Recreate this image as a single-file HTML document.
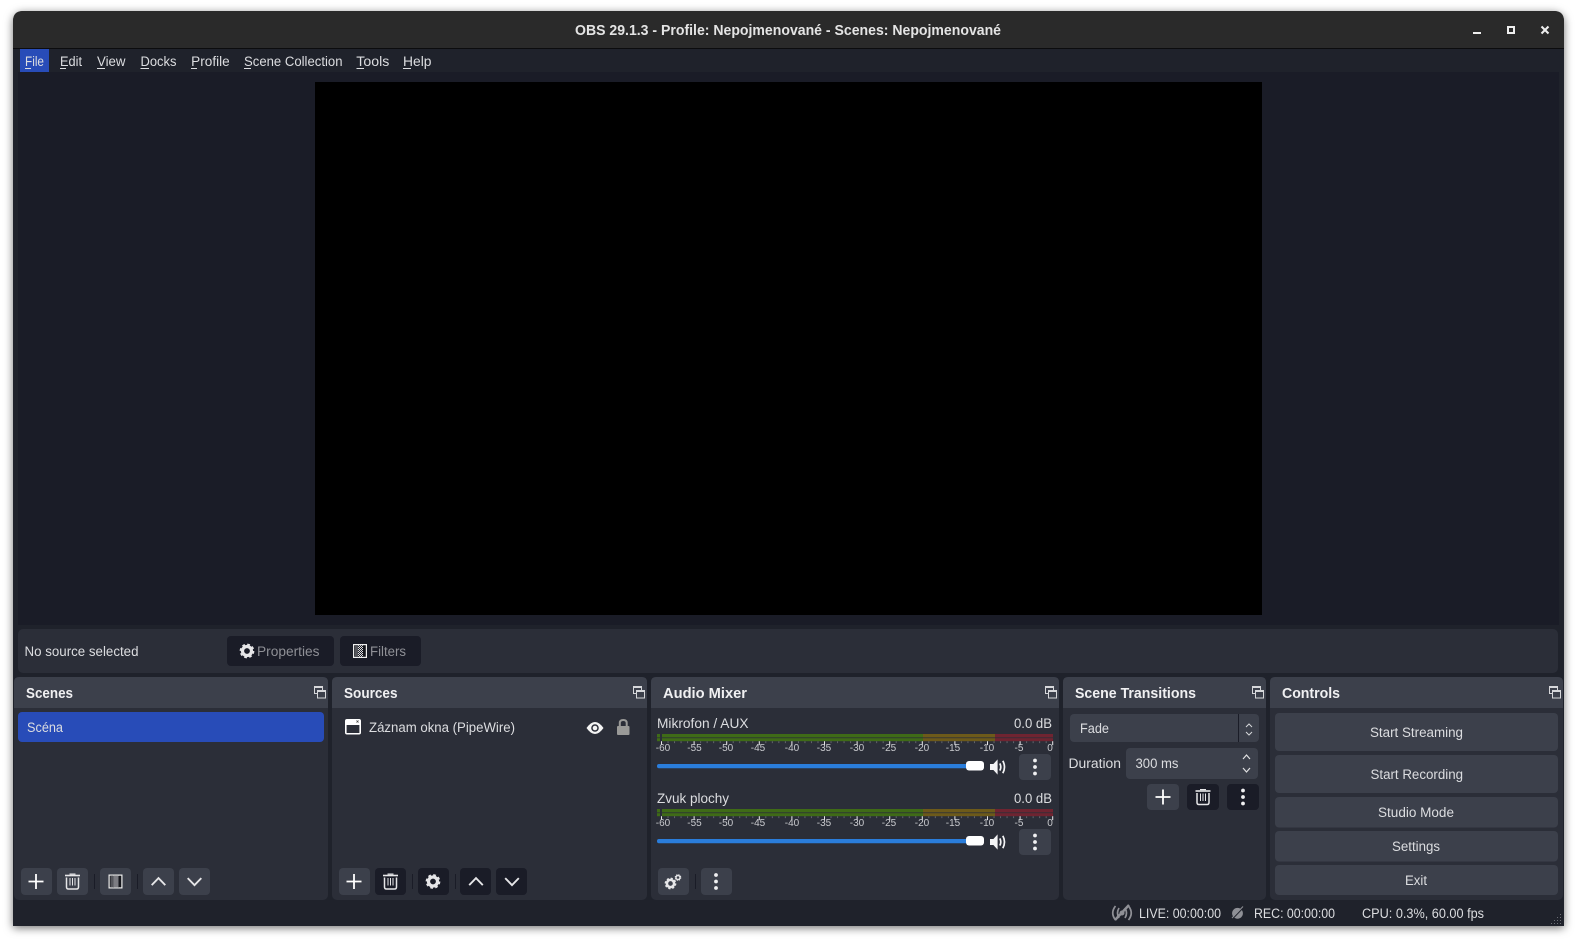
<!DOCTYPE html>
<html><head><meta charset="utf-8"><title>OBS</title>
<style>
html,body{margin:0;padding:0;background:#fff;width:1577px;height:942px;overflow:hidden}
#w{position:absolute;left:13px;top:11px;width:1551px;height:915px;background:#1f222b;border-radius:10px 10px 0 0;box-shadow:0 2px 9px rgba(0,0,0,.55)}
svg{position:absolute;left:0;top:0}
text{font-family:"Liberation Sans",sans-serif;font-size:13.5px;fill:#dcdde0}
.b{font-weight:700;fill:#f0f0f2;font-size:14.5px}
.g{fill:#8f9096}
.m{font-size:10px;fill:#c8c9cd;text-anchor:middle}
</style></head><body>
<div id="w"></div>
<svg width="1577" height="942" viewBox="0 0 1577 942" xmlns="http://www.w3.org/2000/svg">
<defs>
<g id="float" fill="none" stroke="#d6d7da" stroke-width="1">
<path d="M.5 .5H8.5V7.5H.5Z" fill="#3c404b"/><path d="M0 1H9" stroke-width="2"/>
<path d="M3.5 4.5H11.5V12H3.5Z" fill="#3c404b"/><path d="M3 5H12" stroke-width="2"/>
</g>
<g id="plus" stroke="#fff" stroke-width="1.8"><path d="M-7.5 0H7.5M0 -7.5V7.5"/></g>
<g id="trash" fill="none" stroke="#e6e6e8" stroke-width="1.5">
<path d="M-7.5 -6H7.5" stroke-width="1.6"/><path d="M-3 -7.4H3" stroke-width="1.2"/>
<path d="M-6 -4V5.5Q-6 7.5 -4 7.5H4Q6 7.5 6 5.5V-4"/>
<path d="M-2.5 -3.5V4M0 -3.5V4M2.5 -3.5V4" stroke-width="1"/>
</g>
<g id="gear">
<circle r="4.5" fill="none" stroke="#e6e6e8" stroke-width="3.2"/>
<circle r="6.4" fill="none" stroke="#e6e6e8" stroke-width="1.9" stroke-dasharray="2.7 2.33"/>
</g>
<g id="up"><path d="M-6.8 3.6L0 -3.4L6.8 3.6" fill="none" stroke="#e6e6e8" stroke-width="1.9"/></g>
<g id="down"><path d="M-6.8 -3.4L0 3.6L6.8 -3.4" fill="none" stroke="#e6e6e8" stroke-width="1.9"/></g>
<g id="dots" fill="#f0f0f2"><circle cy="-6.5" r="1.9"/><circle r="1.9"/><circle cy="6.5" r="1.9"/></g>
<pattern id="dith" width="2" height="2" patternUnits="userSpaceOnUse"><rect width="2" height="2" fill="#1a1c27"/><rect width="1" height="1" fill="#ddd"/><rect x="1" y="1" width="1" height="1" fill="#ddd"/></pattern>
<g id="filter">
<rect x=".6" y=".6" width="12.8" height="12.8" fill="#15161c" stroke="#eee" stroke-width="1.2"/>
<rect x="5" y="1.2" width="5" height="11.6" fill="url(#dith)"/>
<rect x="2" y="1.2" width="3" height="11.6" fill="#55565c"/>
</g>
<g id="spk" fill="#f4f4f6">
<path d="M0 -3H3.4L7.6 -7.6V7.6L3.4 3H0Z"/>
<path d="M9.8 -3.6Q11.8 0 9.8 3.6M12.8 -6.2Q16.2 0 12.8 6.2" fill="none" stroke="#f4f4f6" stroke-width="1.7"/>
</g>
<g id="meter">
<rect x="0" y="0" width="3" height="3.4" fill="#3f6b17"/><rect x="0" y="4.2" width="3" height="3" fill="#3f6b17"/>
<rect x="5" y="0" width="261" height="3.4" fill="#3f6b17"/><rect x="5" y="4.2" width="261" height="3" fill="#3f6b17"/>
<rect x="266" y="0" width="72" height="3.4" fill="#6d5a1a"/><rect x="266" y="4.2" width="72" height="3" fill="#6d5a1a"/>
<rect x="338" y="0" width="58" height="3.4" fill="#6f2431"/><rect x="338" y="4.2" width="58" height="3" fill="#6f2431"/>
<path d="M4 8.2H396" stroke="#63656c" stroke-width="1.8" stroke-dasharray="1 5.52"/>
<path d="M4 9.2H396.5" stroke="#e6e6e8" stroke-width="3.8" stroke-dasharray="1 31.6"/>
</g>
</defs>

<!-- title bar -->
<path d="M13 48V21Q13 11 23 11H1554Q1564 11 1564 21V48Z" fill="#2a2a2a"/>
<rect x="13" y="48" width="1551" height="1" fill="#0c0c0e"/>
<text x="575" y="35" textLength="426" lengthAdjust="spacingAndGlyphs" style="font-size:14.5px;font-weight:700;fill:#e4e4e4">OBS 29.1.3 - Profile: Nepojmenované - Scenes: Nepojmenované</text>
<rect x="1473" y="32" width="8" height="2" fill="#eee"/>
<rect x="1508" y="27" width="6" height="6" fill="none" stroke="#eee" stroke-width="2"/>
<path d="M1541.5 26.5L1548.5 33.5M1548.5 26.5L1541.5 33.5" stroke="#eee" stroke-width="2.1"/>

<!-- menu -->
<rect x="18" y="72" width="1541" height="553" fill="#1a1c27"/>
<rect x="20" y="49" width="29" height="23" fill="#284cb8"/>
<g>
<text x="25" y="66" textLength="19" lengthAdjust="spacingAndGlyphs">File</text>
<text x="60" y="66" textLength="22" lengthAdjust="spacingAndGlyphs">Edit</text>
<text x="97" y="66" textLength="28.5" lengthAdjust="spacingAndGlyphs">View</text>
<text x="140.5" y="66" textLength="36" lengthAdjust="spacingAndGlyphs">Docks</text>
<text x="191.2" y="66" textLength="38.5" lengthAdjust="spacingAndGlyphs">Profile</text>
<text x="244" y="66" textLength="98.5" lengthAdjust="spacingAndGlyphs">Scene Collection</text>
<text x="356.3" y="66" textLength="33" lengthAdjust="spacingAndGlyphs">Tools</text>
<text x="403" y="66" textLength="28.5" lengthAdjust="spacingAndGlyphs">Help</text>
</g>
<path d="M25 68.5H31M60 68.5H66M97 68.5H105M140.5 68.5H149M191 68.5H197M244 68.5H251M356.5 68.5H364M403 68.5H411" stroke="#dcdde0" stroke-width="1"/>

<!-- preview -->
<rect x="315" y="82" width="947" height="533" fill="#000"/>

<!-- context bar -->
<rect x="18" y="629" width="1540" height="44" rx="5" fill="#2b2e38"/>
<text x="24.5" y="656" textLength="114" lengthAdjust="spacingAndGlyphs">No source selected</text>
<rect x="227" y="636" width="107" height="30" rx="4" fill="#1a1c27"/>
<use href="#gear" transform="translate(247 651)"/>
<text x="257" y="656" textLength="62.5" lengthAdjust="spacingAndGlyphs" class="g">Properties</text>
<rect x="340" y="636" width="81" height="30" rx="4" fill="#1a1c27"/>
<use href="#filter" transform="translate(353 644)"/>
<text x="370" y="656" textLength="36" lengthAdjust="spacingAndGlyphs" class="g">Filters</text>

<!-- docks -->
<g fill="#2b2e38">
<rect x="14" y="677" width="314" height="223" rx="5"/>
<rect x="332" y="677" width="315" height="223" rx="5"/>
<rect x="651" y="677" width="408" height="223" rx="5"/>
<rect x="1063" y="677" width="203" height="223" rx="5"/>
<rect x="1270" y="677" width="293" height="223" rx="5"/>
</g>
<g fill="#3c404b">
<path d="M14 708V682Q14 677 19 677H323Q328 677 328 682V708Z"/>
<path d="M332 708V682Q332 677 337 677H642Q647 677 647 682V708Z"/>
<path d="M651 708V682Q651 677 656 677H1054Q1059 677 1059 682V708Z"/>
<path d="M1063 708V682Q1063 677 1068 677H1261Q1266 677 1266 682V708Z"/>
<path d="M1270 708V682Q1270 677 1275 677H1558Q1563 677 1563 682V708Z"/>
</g>
<text class="b" x="26" y="698" textLength="47" lengthAdjust="spacingAndGlyphs">Scenes</text>
<text class="b" x="344" y="698" textLength="53.5" lengthAdjust="spacingAndGlyphs">Sources</text>
<text class="b" x="663" y="698" textLength="84" lengthAdjust="spacingAndGlyphs">Audio Mixer</text>
<text class="b" x="1075" y="698" textLength="121" lengthAdjust="spacingAndGlyphs">Scene Transitions</text>
<text class="b" x="1282" y="698" textLength="58" lengthAdjust="spacingAndGlyphs">Controls</text>
<use href="#float" transform="translate(314 686)"/>
<use href="#float" transform="translate(633 686)"/>
<use href="#float" transform="translate(1045 686)"/>
<use href="#float" transform="translate(1252 686)"/>
<use href="#float" transform="translate(1549 686)"/>

<!-- scenes -->
<rect x="18" y="712" width="306" height="30" rx="4" fill="#284cb8"/>
<text x="27" y="732" textLength="36" lengthAdjust="spacingAndGlyphs">Scéna</text>
<g fill="#3c404b">
<rect x="21" y="868" width="31" height="27" rx="4"/><rect x="57" y="868" width="31" height="27" rx="4"/>
<rect x="100" y="868" width="31" height="27" rx="4"/><rect x="143" y="868" width="31" height="27" rx="4"/><rect x="179" y="868" width="31" height="27" rx="4"/>
</g>
<rect x="94" y="874" width="1" height="15" fill="#1a1c27"/><rect x="137" y="874" width="1" height="15" fill="#1a1c27"/>
<use href="#plus" transform="translate(36 881.5)"/>
<use href="#trash" transform="translate(72.5 881.5)"/>
<use href="#filter" transform="translate(108.5 874.5)"/>
<use href="#up" transform="translate(158.5 881.5)"/>
<use href="#down" transform="translate(194.5 881.5)"/>

<!-- sources -->
<rect x="345" y="719" width="16" height="15.5" rx="2" fill="#fff"/>
<rect x="346.6" y="725" width="12.8" height="8" fill="#2b2e38"/>
<path d="M356.5 720.5L358.5 722.5M358.5 720.5L356.5 722.5" stroke="#444" stroke-width=".8"/>
<text x="369" y="732" textLength="146" lengthAdjust="spacingAndGlyphs">Záznam okna (PipeWire)</text>
<path d="M586.5 728Q595 716 603.5 728Q595 740 586.5 728Z" fill="#f4f4f4"/>
<circle cx="595" cy="728" r="3.8" fill="#2b2e38"/><circle cx="595" cy="728" r="2.3" fill="#f4f4f4"/>
<rect x="617" y="726" width="12.5" height="9" rx="1" fill="#9a9a98"/>
<path d="M619.8 726.5V723Q619.8 720 623.25 720Q626.7 720 626.7 723V726.5" fill="none" stroke="#9a9a98" stroke-width="2"/>
<rect x="339" y="868" width="31" height="27" rx="4" fill="#3c404b"/>
<g fill="#1a1c27">
<rect x="375" y="868" width="31" height="27" rx="4"/><rect x="418" y="868" width="31" height="27" rx="4"/>
<rect x="460" y="868" width="31" height="27" rx="4"/><rect x="496" y="868" width="31" height="27" rx="4"/>
<rect x="412" y="874" width="1" height="15"/><rect x="455" y="874" width="1" height="15"/>
</g>
<use href="#plus" transform="translate(354 881.5)"/>
<use href="#trash" transform="translate(390.5 881.5)"/>
<use href="#gear" transform="translate(433 881.5)"/>
<use href="#up" transform="translate(476 881.5)"/>
<use href="#down" transform="translate(512 881.5)"/>

<!-- mixer channel 1 -->
<text x="657" y="728" textLength="91.5" lengthAdjust="spacingAndGlyphs">Mikrofon / AUX</text>
<text x="1014" y="728" textLength="38" lengthAdjust="spacingAndGlyphs">0.0 dB</text>
<use href="#meter" transform="translate(657 734)"/>
<g>
<text class="m" x="663" y="751">-60</text><text class="m" x="694.5" y="751">-55</text><text class="m" x="726" y="751">-50</text><text class="m" x="758" y="751">-45</text><text class="m" x="792" y="751">-40</text><text class="m" x="824" y="751">-35</text><text class="m" x="857" y="751">-30</text><text class="m" x="889" y="751">-25</text><text class="m" x="922" y="751">-20</text><text class="m" x="953" y="751">-15</text><text class="m" x="987" y="751">-10</text><text class="m" x="1019" y="751">-5</text><text class="m" x="1050" y="751">0</text>
</g>
<rect x="657" y="764" width="312" height="4.2" rx="2" fill="#2a7ddb"/>
<rect x="966" y="761" width="18" height="9.5" rx="3" fill="#fff"/>
<use href="#spk" transform="translate(990 767)"/>
<rect x="1019" y="754" width="32" height="26" rx="4" fill="#3c404b"/>
<use href="#dots" transform="translate(1035 767)"/>

<!-- mixer channel 2 -->
<text x="657" y="803" textLength="72" lengthAdjust="spacingAndGlyphs">Zvuk plochy</text>
<text x="1014" y="803" textLength="38" lengthAdjust="spacingAndGlyphs">0.0 dB</text>
<use href="#meter" transform="translate(657 809)"/>
<g>
<text class="m" x="663" y="826">-60</text><text class="m" x="694.5" y="826">-55</text><text class="m" x="726" y="826">-50</text><text class="m" x="758" y="826">-45</text><text class="m" x="792" y="826">-40</text><text class="m" x="824" y="826">-35</text><text class="m" x="857" y="826">-30</text><text class="m" x="889" y="826">-25</text><text class="m" x="922" y="826">-20</text><text class="m" x="953" y="826">-15</text><text class="m" x="987" y="826">-10</text><text class="m" x="1019" y="826">-5</text><text class="m" x="1050" y="826">0</text>
</g>
<rect x="657" y="839" width="312" height="4.2" rx="2" fill="#2a7ddb"/>
<rect x="966" y="836" width="18" height="9.5" rx="3" fill="#fff"/>
<use href="#spk" transform="translate(990 842)"/>
<rect x="1019" y="829" width="32" height="26" rx="4" fill="#3c404b"/>
<use href="#dots" transform="translate(1035 842)"/>

<!-- mixer toolbar -->
<rect x="658" y="868" width="31" height="27" rx="4" fill="#3c404b"/>
<rect x="701" y="868" width="31" height="27" rx="4" fill="#3c404b"/>
<rect x="695" y="874" width="1" height="15" fill="#1a1c27"/>
<g transform="translate(670.5 883.5) scale(.8)"><use href="#gear"/></g>
<g transform="translate(678 877.5) scale(.45)"><use href="#gear"/></g>
<use href="#dots" transform="translate(716 881.5)"/>

<!-- transitions -->
<rect x="1070" y="714" width="189" height="28" rx="4" fill="#3c404b"/>
<rect x="1238" y="714" width="1" height="28" fill="#1a1c27"/>
<text x="1080" y="733" textLength="29" lengthAdjust="spacingAndGlyphs">Fade</text>
<path d="M1246 727L1249 724L1252 727M1246 732L1249 735L1252 732" fill="none" stroke="#d6d7da" stroke-width="1"/>
<text x="1068.5" y="768" textLength="52.5" lengthAdjust="spacingAndGlyphs">Duration</text>
<rect x="1126" y="748" width="132" height="31" rx="4" fill="#3c404b"/>
<text x="1135.5" y="768" textLength="43" lengthAdjust="spacingAndGlyphs">300 ms</text>
<path d="M1243 759L1246.5 755L1250 759M1243 768L1246.5 772L1250 768" fill="none" stroke="#e0e0e2" stroke-width="1.2"/>
<rect x="1147" y="784" width="32" height="26" rx="4" fill="#3c404b"/>
<rect x="1187" y="784" width="32" height="26" rx="4" fill="#1a1c27"/>
<rect x="1227" y="784" width="32" height="26" rx="4" fill="#1a1c27"/>
<use href="#plus" transform="translate(1163 797)"/>
<use href="#trash" transform="translate(1203 797)"/>
<use href="#dots" transform="translate(1243 797)"/>

<!-- controls -->
<g fill="#3c404b">
<rect x="1275" y="713" width="283" height="38" rx="4"/>
<rect x="1275" y="755" width="283" height="38" rx="4"/>
<rect x="1275" y="797" width="283" height="30.5" rx="4"/>
<rect x="1275" y="831" width="283" height="30.5" rx="4"/>
<rect x="1275" y="865" width="283" height="30" rx="4"/>
</g>
<text x="1370" y="737" textLength="93" lengthAdjust="spacingAndGlyphs">Start Streaming</text>
<text x="1370.5" y="779" textLength="92.5" lengthAdjust="spacingAndGlyphs">Start Recording</text>
<text x="1378" y="817" textLength="76" lengthAdjust="spacingAndGlyphs">Studio Mode</text>
<text x="1392" y="851" textLength="48" lengthAdjust="spacingAndGlyphs">Settings</text>
<text x="1405" y="885" textLength="22" lengthAdjust="spacingAndGlyphs">Exit</text>

<!-- status -->
<g fill="none" stroke="#8f9096" stroke-width="1.7">
<path d="M1115.5 906Q1110 913 1115.5 920M1128.5 906Q1134 913 1128.5 920"/>
<path d="M1119 908Q1116 913 1119 918M1125 908Q1128 913 1125 918"/>
<path d="M1115 920L1129 905" stroke-width="2.4"/>
</g>
<circle cx="1122" cy="913" r="2.5" fill="#8f9096"/>
<text x="1139" y="918" textLength="82" lengthAdjust="spacingAndGlyphs">LIVE: 00:00:00</text>
<circle cx="1237.5" cy="913.3" r="5.4" fill="#8f9096"/>
<path d="M1232 919.5L1244 907" stroke="#1f222b" stroke-width="1"/>
<path d="M1232 918L1243 906.5" stroke="#8f9096" stroke-width="1"/>
<text x="1254" y="918" textLength="81" lengthAdjust="spacingAndGlyphs">REC: 00:00:00</text>
<text x="1362" y="918" textLength="122" lengthAdjust="spacingAndGlyphs">CPU: 0.3%, 60.00 fps</text>
<g fill="#6c6e75">
<rect x="1560" y="914" width="1" height="1"/>
<rect x="1557" y="917" width="1" height="1"/><rect x="1560" y="917" width="1" height="1"/>
<rect x="1554" y="920" width="1" height="1"/><rect x="1557" y="920" width="1" height="1"/><rect x="1560" y="920" width="1" height="1"/>
<rect x="1551" y="923" width="1" height="1"/><rect x="1554" y="923" width="1" height="1"/><rect x="1557" y="923" width="1" height="1"/><rect x="1560" y="923" width="1" height="1"/>
</g>
</svg>
</body></html>
